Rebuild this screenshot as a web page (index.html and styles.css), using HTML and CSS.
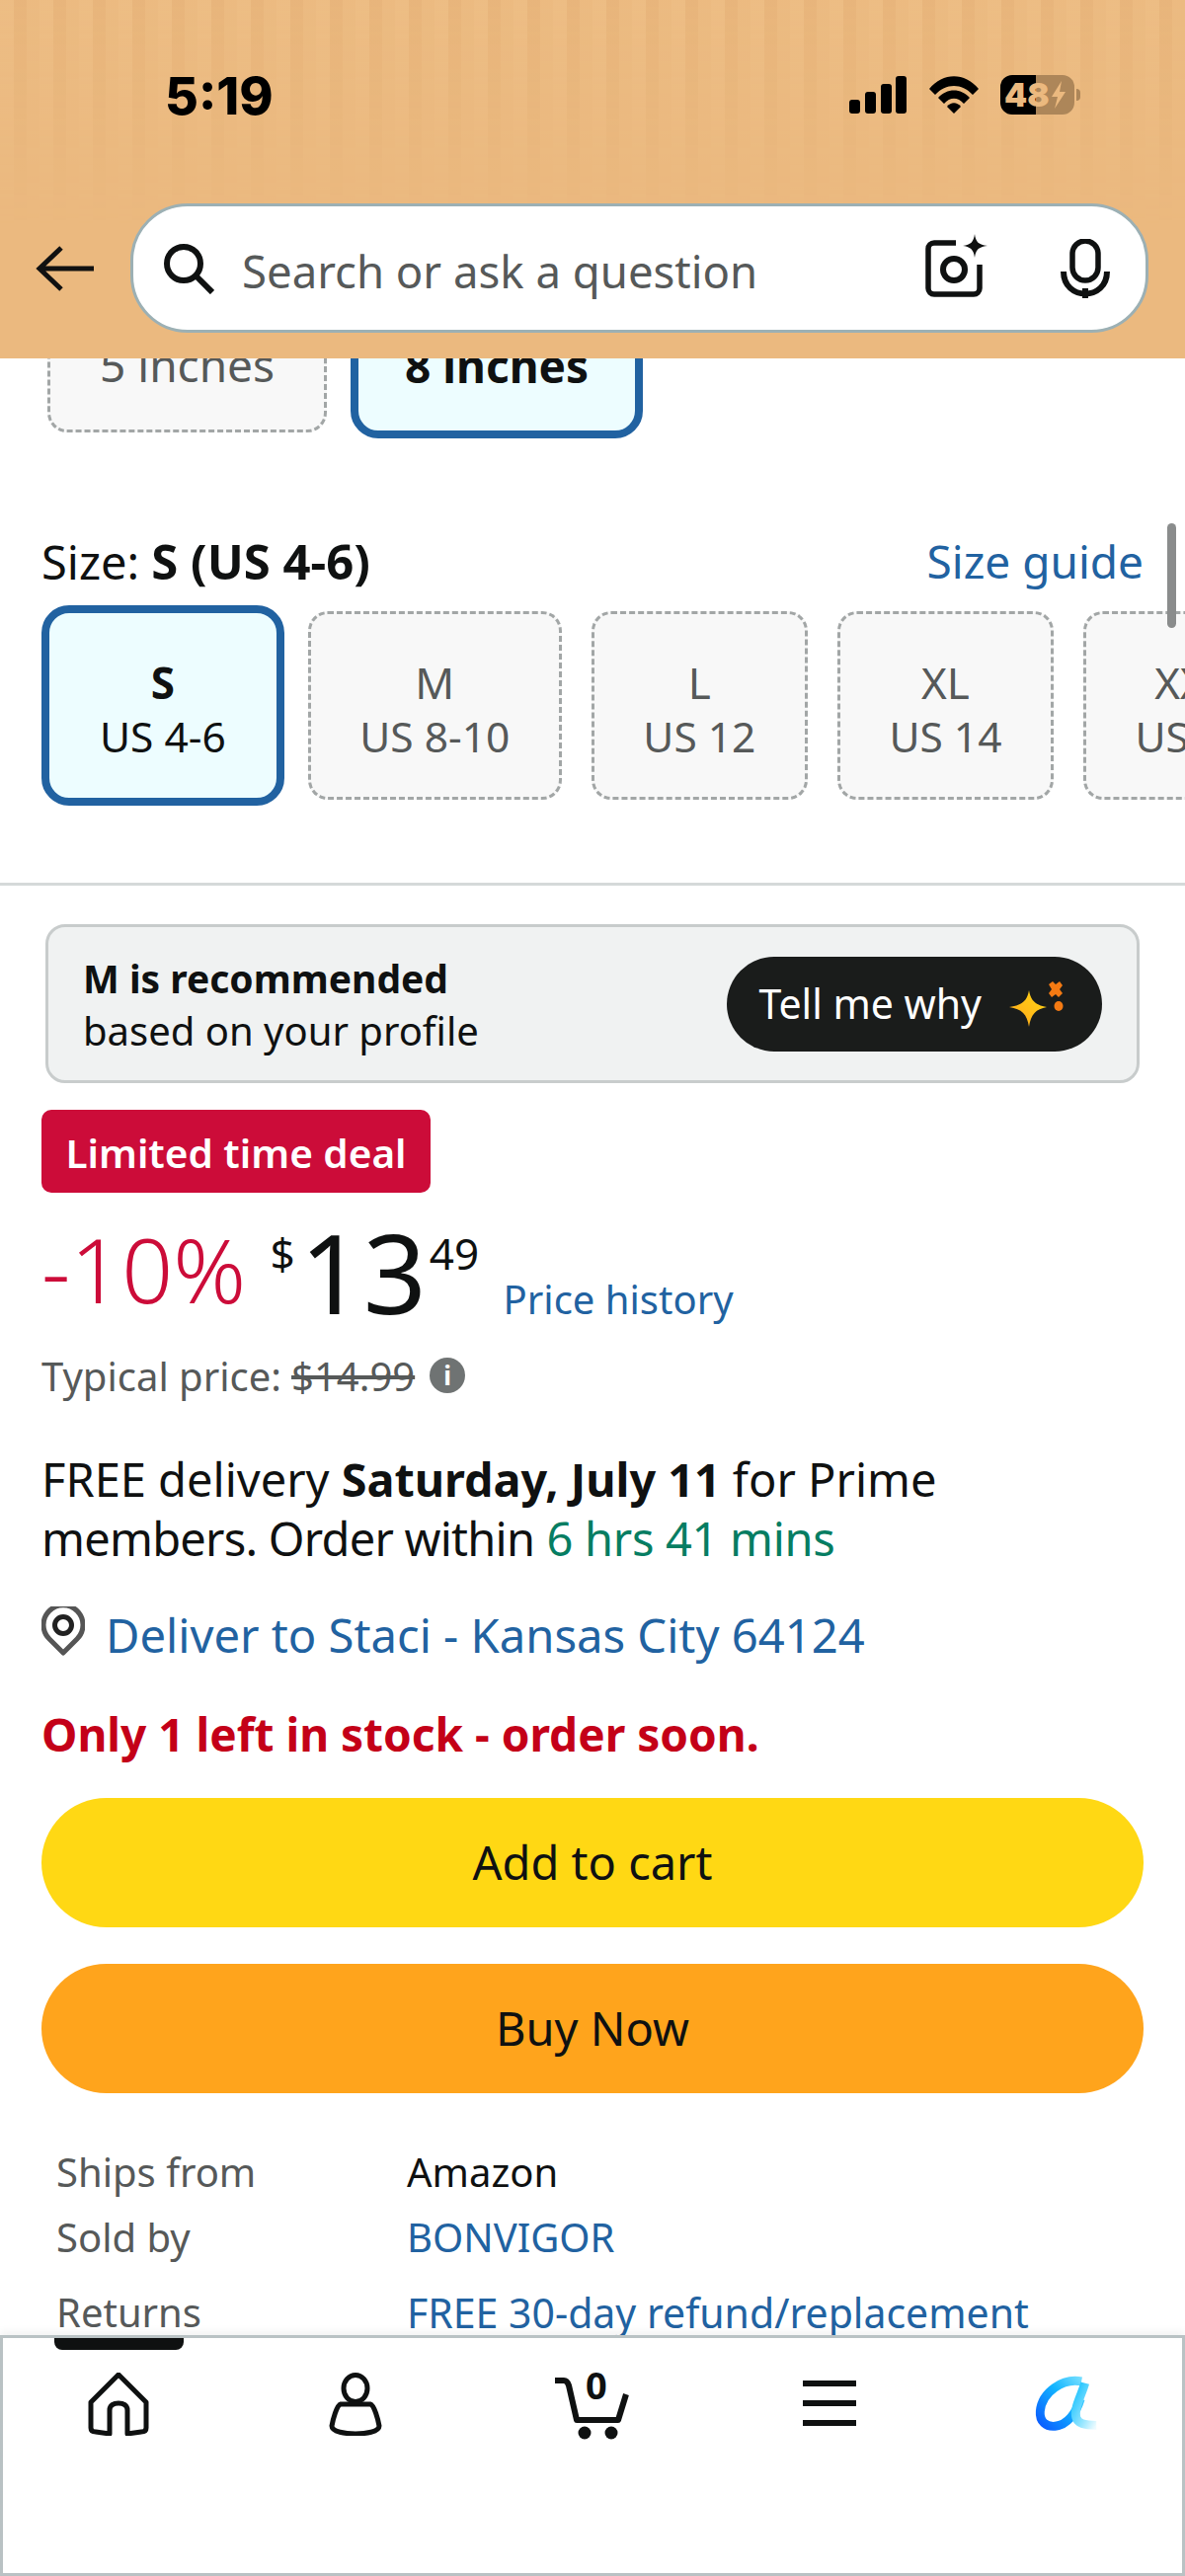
FILE: index.html

```html
<!DOCTYPE html>
<html lang="en">
<head>
  <meta charset="UTF-8" />
  <meta name="viewport" content="width=device-width, initial-scale=1.0"/>
  <title>Product</title>
  <link rel="stylesheet" href="styles.css">
</head>
<body>
<div class="phone">
  <header class="top">
    <div class="status">
      <span class="clock">5:19</span>
      <div class="status-icons">
        <svg class="signal" viewBox="0 0 58 38"><rect x="0" y="24" width="11" height="14" rx="3"/><rect x="16" y="16" width="11" height="22" rx="3"/><rect x="32" y="8" width="11" height="30" rx="3"/><rect x="47" y="0" width="11" height="38" rx="3"/></svg>
        <svg class="wifi" viewBox="0 0 50 38"><path d="M0 13 C14 -4 36 -4 50 13 L44 19 C33 7 17 7 6 19 Z"/><path d="M9 22 C18 12 32 12 41 22 L35 28 C29 21 21 21 15 28 Z"/><path d="M18 31 C22 26 28 26 32 31 L25 38 Z"/></svg>
        <div class="battery"><span>48</span><svg class="bolt" viewBox="0 0 14 28"><path d="M10 0 L0 16 H6 L3 28 L14 11 H8 Z"/></svg></div>
        <i class="battery-cap"></i>
      </div>
    </div>
    <div class="search-row">
      <svg class="back" viewBox="0 0 60 48"><path d="M26 3 L4 24 L26 45 M4 24 H59" fill="none" stroke="#111" stroke-width="5"/></svg>
      <div class="search">
        <svg class="glass" viewBox="0 0 52 52"><circle cx="21" cy="21" r="17" fill="none" stroke="#0f1111" stroke-width="6"/><path d="M33 33 L50 50" stroke="#0f1111" stroke-width="6"/></svg>
        <span class="placeholder">Search or ask a question</span>
        <svg class="lens" viewBox="0 0 66 66"><path d="M33 9 H11 A6 6 0 0 0 5 15 V55 A6 6 0 0 0 11 61 H51 A6 6 0 0 0 57 55 V31" fill="none" stroke="#0f1111" stroke-width="5.5"/><circle cx="31" cy="36" r="11" fill="none" stroke="#0f1111" stroke-width="6"/><path d="M52 0 C53 8 56 11 65 12 C56 13 53 16 52 24 C51 16 48 13 40 12 C48 11 51 8 52 0 Z" fill="#0f1111"/></svg>
        <svg class="mic" viewBox="0 0 50 60"><rect x="12" y="2" width="26" height="40" rx="13" fill="none" stroke="#0f1111" stroke-width="5.5"/><path d="M3 33 C3 63 47 63 47 33" fill="none" stroke="#0f1111" stroke-width="6"/><rect x="22" y="50" width="6" height="10" fill="#0f1111"/></svg>
      </div>
    </div>
  </header>

  <main class="content">
    <div class="chips chips-length">
      <div class="chip"><b class="chip-main">5 inches</b></div>
      <div class="chip chip-on"><b class="chip-main">8 inches</b></div>
    </div>

    <div class="size-head">
      <span>Size: <b>S (US 4-6)</b></span>
      <a class="link">Size guide</a>
    </div>
    <div class="chips chips-size">
      <div class="chip chip-on"><b class="chip-main">S</b><span class="chip-sub">US 4-6</span></div>
      <div class="chip"><b class="chip-main">M</b><span class="chip-sub">US 8-10</span></div>
      <div class="chip"><b class="chip-main">L</b><span class="chip-sub">US 12</span></div>
      <div class="chip"><b class="chip-main">XL</b><span class="chip-sub">US 14</span></div>
      <div class="chip"><b class="chip-main">XXL</b><span class="chip-sub">US 16</span></div>
    </div>
    <hr class="rule">

    <div class="reco">
      <div class="reco-text"><b>M is recommended</b><span>based on your profile</span></div>
      <div class="why">Tell me why
        <svg class="spark" viewBox="0 0 58 46"><defs><linearGradient id="sg" x1="0" y1="1" x2="1" y2="0"><stop offset="0" stop-color="#ffa41c"/><stop offset="1" stop-color="#ffd814"/></linearGradient></defs><path d="M20 9 C22 20 27 24 38 26 C27 28 22 33 20 46 C18 33 13 28 0 26 C13 24 18 20 20 9 Z" fill="url(#sg)"/><path d="M40 3 L44 0 L47 3 L51 0 L54 4 L51 8 L54 12 L50 16 L47 13 L43 16 L40 12 L43 8 Z" fill="#f47a13"/><ellipse cx="50" cy="25" rx="4.5" ry="5" fill="#f47a13"/></svg>
      </div>
    </div>

    <div class="deal">Limited time deal</div>

    <div class="price-row">
      <span class="off">-10%</span>
      <span class="price"><sup class="cur">$</sup><span class="whole">13</span><sup class="cents">49</sup></span>
      <a class="link hist">Price history</a>
    </div>
    <div class="typical">Typical price: <s>$14.99</s> <i class="info">i</i></div>

    <p class="delivery">FREE delivery <b>Saturday, July 11</b> for Prime <span class="tight">members. Order within</span> <span class="green">6 hrs 41 mins</span></p>

    <div class="deliver-to">
      <svg class="pin" viewBox="0 0 44 50"><path d="M22 47 L8 33 A20 20 0 1 1 36 33 Z" fill="none" stroke="#555" stroke-width="5" stroke-linejoin="round"/><circle cx="22" cy="19" r="8.5" fill="none" stroke="#222" stroke-width="5"/></svg>
      <a class="link">Deliver to Staci - Kansas City 64124</a>
    </div>

    <div class="stock">Only 1 left in stock - order soon.</div>

    <div class="btn btn-cart">Add to cart</div>
    <div class="btn btn-buy">Buy Now</div>

    <dl class="facts">
      <dt>Ships from</dt><dd>Amazon</dd>
      <dt>Sold by</dt><dd class="link">BONVIGOR</dd>
      <dt class="gap">Returns</dt><dd class="link gap returns">FREE 30-day refund/replacement</dd>
    </dl>
    <div class="scrollbar"></div>
  </main>

  <nav class="tabs">
    <div class="tab-mark"></div>
    <svg class="tab" viewBox="0 0 64 64"><path d="M32 2 L60 30 V56 C60 59 58 60 55 60 L41 62 V38 C41 33 37 31 32 31 C27 31 23 33 23 38 V62 L9 60 C6 60 4 59 4 56 V30 Z" fill="none" stroke="#0f1111" stroke-width="5" stroke-linejoin="round"/></svg>
    <svg class="tab person" viewBox="0 0 54 64"><ellipse cx="27" cy="16" rx="12" ry="13.5" fill="none" stroke="#0f1111" stroke-width="5"/><path d="M12 32 H42 C46 33 50 48 51 54 C51 60 37 62 27 62 C17 62 3 60 3 54 C4 48 8 33 12 32 Z" fill="none" stroke="#0f1111" stroke-width="5" stroke-linejoin="round"/></svg>
    <div class="cart">
      <svg viewBox="0 0 80 74"><path d="M2 14 H11 C14 14 15 16 16 19 L24 54 H66 L74 28" fill="none" stroke="#0f1111" stroke-width="6" stroke-linejoin="round"/><circle cx="32" cy="67" r="6.5" fill="#0f1111"/><circle cx="59" cy="67" r="6.5" fill="#0f1111"/></svg>
      <span>0</span>
    </div>
    <svg class="tab" viewBox="0 0 64 64"><path d="M5 11 H59 M5 31 H59 M5 51 H59" stroke="#0f1111" stroke-width="6"/></svg>
    <svg class="tab" viewBox="0 0 72 64"><defs><linearGradient id="ag" x1="0" y1="1" x2="1" y2="0"><stop offset="0" stop-color="#0a5cff"/><stop offset=".6" stop-color="#12b5ff"/><stop offset="1" stop-color="#6fdcff"/></linearGradient><linearGradient id="tg" x1="0" y1="0" x2="1" y2="1"><stop offset="0" stop-color="#12bfff"/><stop offset=".6" stop-color="#8fe4ff"/><stop offset="1" stop-color="#eefbff"/></linearGradient></defs><path d="M53 6 C32 2 8 18 6 40 C5 52 13 58 23 57 C37 56 47 42 52 26" fill="none" stroke="url(#ag)" stroke-width="10"/><path d="M57 8 C54 20 44 36 47 47 C49 54 56 56 70 56" fill="none" stroke="url(#tg)" stroke-width="10"/></svg>
  </nav>
</div>
</body>
</html>
```

FILE: styles.css

```css
* {
  box-sizing: border-box;
}
body {
  margin: 0;
  background: white;
  font-family: 'Noto Sans', sans-serif;
  color: #0f1111;
}
.phone {
  width: 1200px;
  height: 2609px;
  display: flex;
  flex-direction: column;
  overflow: hidden;
}

/* header */
.top {
  position: relative;
  height: 363px;
  flex: none;
  background: #ebb97f;
  z-index: 2;
}
.top::before {
  content: "";
  position: absolute;
  left: 0;
  right: 0;
  top: 0;
  height: 230px;
  background: repeating-linear-gradient(90deg, rgba(255,220,170,0.12) 0 14px, rgba(200,140,80,0.07) 14px 27px, rgba(255,220,170,0.05) 27px 40px);
  -webkit-mask-image: linear-gradient(#000, transparent);
}
.status {
  position: relative;
  display: flex;
  justify-content: space-between;
  padding: 67px 0 0 167px;
  height: 206px;
}
.clock {
  font-family: 'Inter', sans-serif;
  font-weight: 800;
  font-size: 52px;
  line-height: 62px;
  color: #000;
}
.status-icons {
  display: flex;
  align-items: flex-start;
  padding: 10px 106px 0 0;
}
.signal {
  width: 58px;
  height: 38px;
}
.wifi {
  width: 50px;
  height: 38px;
  margin-left: 23px;
}
.battery {
  width: 75px;
  height: 40px;
  margin-left: 22px;
  margin-top: -1px;
  border-radius: 12px;
  background: linear-gradient(90deg, #000 36px, #ad8659 36px);
  display: flex;
  align-items: center;
  padding-left: 4px;
  color: #ebb97f;
  font-family: 'Inter', sans-serif;
  font-weight: 900;
  font-size: 33px;
  line-height: 40px;
}
.bolt {
  width: 14px;
  height: 28px;
  fill: #ebb97f;
  margin-left: 2px;
}
.battery-cap {
  width: 4px;
  height: 12px;
  margin: 13px 0 0 2px;
  border-radius: 0 4px 4px 0;
  background: #ad8659;
}
.search-row {
  position: relative;
  display: flex;
  align-items: center;
  padding: 0 37px 0 36px;
}
.back {
  width: 60px;
  height: 48px;
  flex: none;
  margin-right: 36px;
}
.search {
  flex: 1;
  height: 131px;
  background: white;
  border: 3px solid #9cb0b4;
  border-radius: 58px;
  display: flex;
  align-items: center;
  padding: 0 36px 0 30px;
}
.glass {
  width: 52px;
  height: 52px;
  flex: none;
}
.placeholder {
  flex: 1;
  margin-left: 28px;
  padding-top: 5px;
  font-size: 45.5px;
  color: #565959;
}
.lens {
  width: 66px;
  height: 66px;
  margin: -4px 73px 0 0;
}
.mic {
  width: 50px;
  height: 60px;
}

/* scrolled content */
.content {
  position: relative;
  flex: 1;
  min-height: 0;
  overflow: hidden;
  padding: 0 42px;
}
.chips {
  display: flex;
  gap: 30px;
  margin: 0 -42px;
  padding: 0 48px;
  align-items: center;
}
.chip {
  flex: none;
  display: flex;
  flex-direction: column;
  align-items: center;
  justify-content: center;
  height: 191px;
  padding: 0 49.5px;
  background: #f8f8f8;
  border: 3px dashed #a2a6a6;
  border-radius: 20px;
  color: #565959;
}
.chip-on {
  height: 203px;
  margin: 0 -6px;
  padding: 0 51px;
  background: #edfdff;
  border: 8px solid #2162a1;
  border-radius: 28px;
  color: #0f1111;
}
.chip-main {
  font-size: 44px;
  line-height: 62px;
  font-weight: 400;
}
.chip-on .chip-main {
  font-weight: 700;
}
.chip-sub {
  font-size: 42.5px;
  line-height: 48px;
  white-space: nowrap;
}
.chips-length {
  margin-top: -122px;
}
.chips-length .chip {
  padding: 0 50px;
  justify-content: flex-start;
}
.chips-length .chip-on {
  padding: 0 47px;
}
.chips-length .chip-main {
  font-size: 46px;
  margin-top: 88px;
}
.chips-length .chip-on .chip-main {
  margin-top: 90px;
}
.size-head {
  display: flex;
  justify-content: space-between;
  align-items: center;
  height: 60px;
  margin-top: 94px;
  font-size: 46px;
  line-height: 60px;
}
.size-head span {
  font-size: 47px;
}
.size-head b {
  font-size: 49px;
}
.chips-size {
  margin-top: 15px;
}
.link {
  color: #2162a1;
}
.rule {
  height: 3px;
  border: 0;
  background: #d5d9d9;
  margin: 78px -42px 0;
}
.reco {
  display: flex;
  justify-content: space-between;
  align-items: center;
  height: 161px;
  margin: 39px 4px 0;
  padding: 0 35px;
  background: #f0f2f2;
  border: 3px solid #c8cccc;
  border-radius: 20px;
  font-size: 40px;
  line-height: 53px;
}
.reco-text {
  display: flex;
  flex-direction: column;
}
.reco-text b {
  font-size: 39px;
}
.why {
  display: flex;
  align-items: center;
  height: 96px;
  padding: 0 36px 0 33px;
  background: #1a1c1b;
  border-radius: 48px;
  color: white;
  font-size: 41px;
}
.spark {
  width: 58px;
  height: 50px;
  margin-left: 28px;
}
.deal {
  width: 394px;
  height: 84px;
  margin-top: 27px;
  background: #cc0c39;
  border-radius: 10px;
  color: white;
  font-size: 40.5px;
  font-weight: 600;
  line-height: 88px;
  text-align: center;
}
.price-row {
  height: 128px;
  margin-top: 13px;
  font-size: 40px;
  line-height: 128px;
}
.off {
  font-size: 91px;
  font-weight: 300;
  color: #cc0c39;
  vertical-align: 11px;
}
.price {
  display: inline-flex;
  align-items: baseline;
  margin-left: 14px;
  font-size: 112px;
}
.price sup {
  font-size: 44px;
  line-height: 44px;
  position: relative;
  top: -45px;
  vertical-align: baseline;
}
.price .cur {
  margin-right: 5px;
}
.price .cents {
  margin-left: 3px;
}
.hist {
  margin-left: 14px;
}
.typical {
  display: flex;
  align-items: center;
  gap: 10px;
  height: 56px;
  margin-top: 16px;
  font-size: 40px;
  color: #565959;
}
.info {
  width: 36px;
  height: 36px;
  margin-left: 5px;
  border-radius: 50%;
  background: #6f7373;
  color: white;
  font-size: 26px;
  font-weight: 700;
  font-style: normal;
  line-height: 36px;
  text-align: center;
}
.delivery {
  width: 1100px;
  margin: 47px 0 0;
  font-size: 47px;
  line-height: 60px;
}
.delivery b {
  font-size: 46.7px;
}
.tight {
  letter-spacing: -0.75px;
}
.green {
  color: #067d62;
  letter-spacing: -0.3px;
}
.deliver-to {
  display: flex;
  align-items: center;
  gap: 21px;
  height: 60px;
  margin-top: 38px;
  font-size: 47.2px;
}
.pin {
  width: 44px;
  height: 50px;
  margin-top: -8px;
}
.stock {
  margin-top: 40px;
  font-size: 46px;
  line-height: 60px;
  font-weight: 700;
  color: #c40018;
}
.btn {
  height: 131px;
  border-radius: 66px;
  font-size: 47px;
  line-height: 131px;
  text-align: center;
}
.btn-cart {
  margin-top: 35px;
  background: #ffd814;
}
.btn-buy {
  margin-top: 37px;
  background: #ffa41c;
}
.facts {
  display: grid;
  grid-template-columns: 355px 1fr;
  margin: 52px 0 0 15px;
  font-size: 40px;
  line-height: 56px;
}
.facts dt {
  color: #565959;
  margin-bottom: 10px;
}
.facts dd {
  margin: 0 0 10px;
}
.facts .gap {
  margin-top: 10px;
}
.facts .returns {
  font-size: 41px;
}
.scrollbar {
  position: absolute;
  left: 1182px;
  top: 167px;
  width: 9px;
  height: 106px;
  border-radius: 5px;
  background: #8a8c8c;
}

/* bottom bar */
.tabs {
  position: relative;
  height: 244px;
  flex: none;
  display: grid;
  grid-template-columns: repeat(5, 240px);
  justify-content: center;
  justify-items: center;
  align-items: start;
  padding-top: 35px;
  background: white;
  border: 3px solid #b9c2c4;
  box-shadow: 0 -4px 8px rgba(0,0,0,0.05);
}
.tab-mark {
  position: absolute;
  left: 52px;
  top: 0;
  width: 131px;
  height: 12px;
  background: #0f1111;
  border-radius: 0 0 8px 8px;
}
.tab {
  width: 64px;
  height: 64px;
}
.person {
  width: 54px;
}
.cart {
  position: relative;
  width: 80px;
  height: 74px;
  margin-top: -6px;
}
.cart svg {
  width: 80px;
  height: 74px;
}
.cart span {
  position: absolute;
  left: 33px;
  top: -8px;
  font-size: 38px;
  font-weight: 700;
  line-height: 52px;
}
```
